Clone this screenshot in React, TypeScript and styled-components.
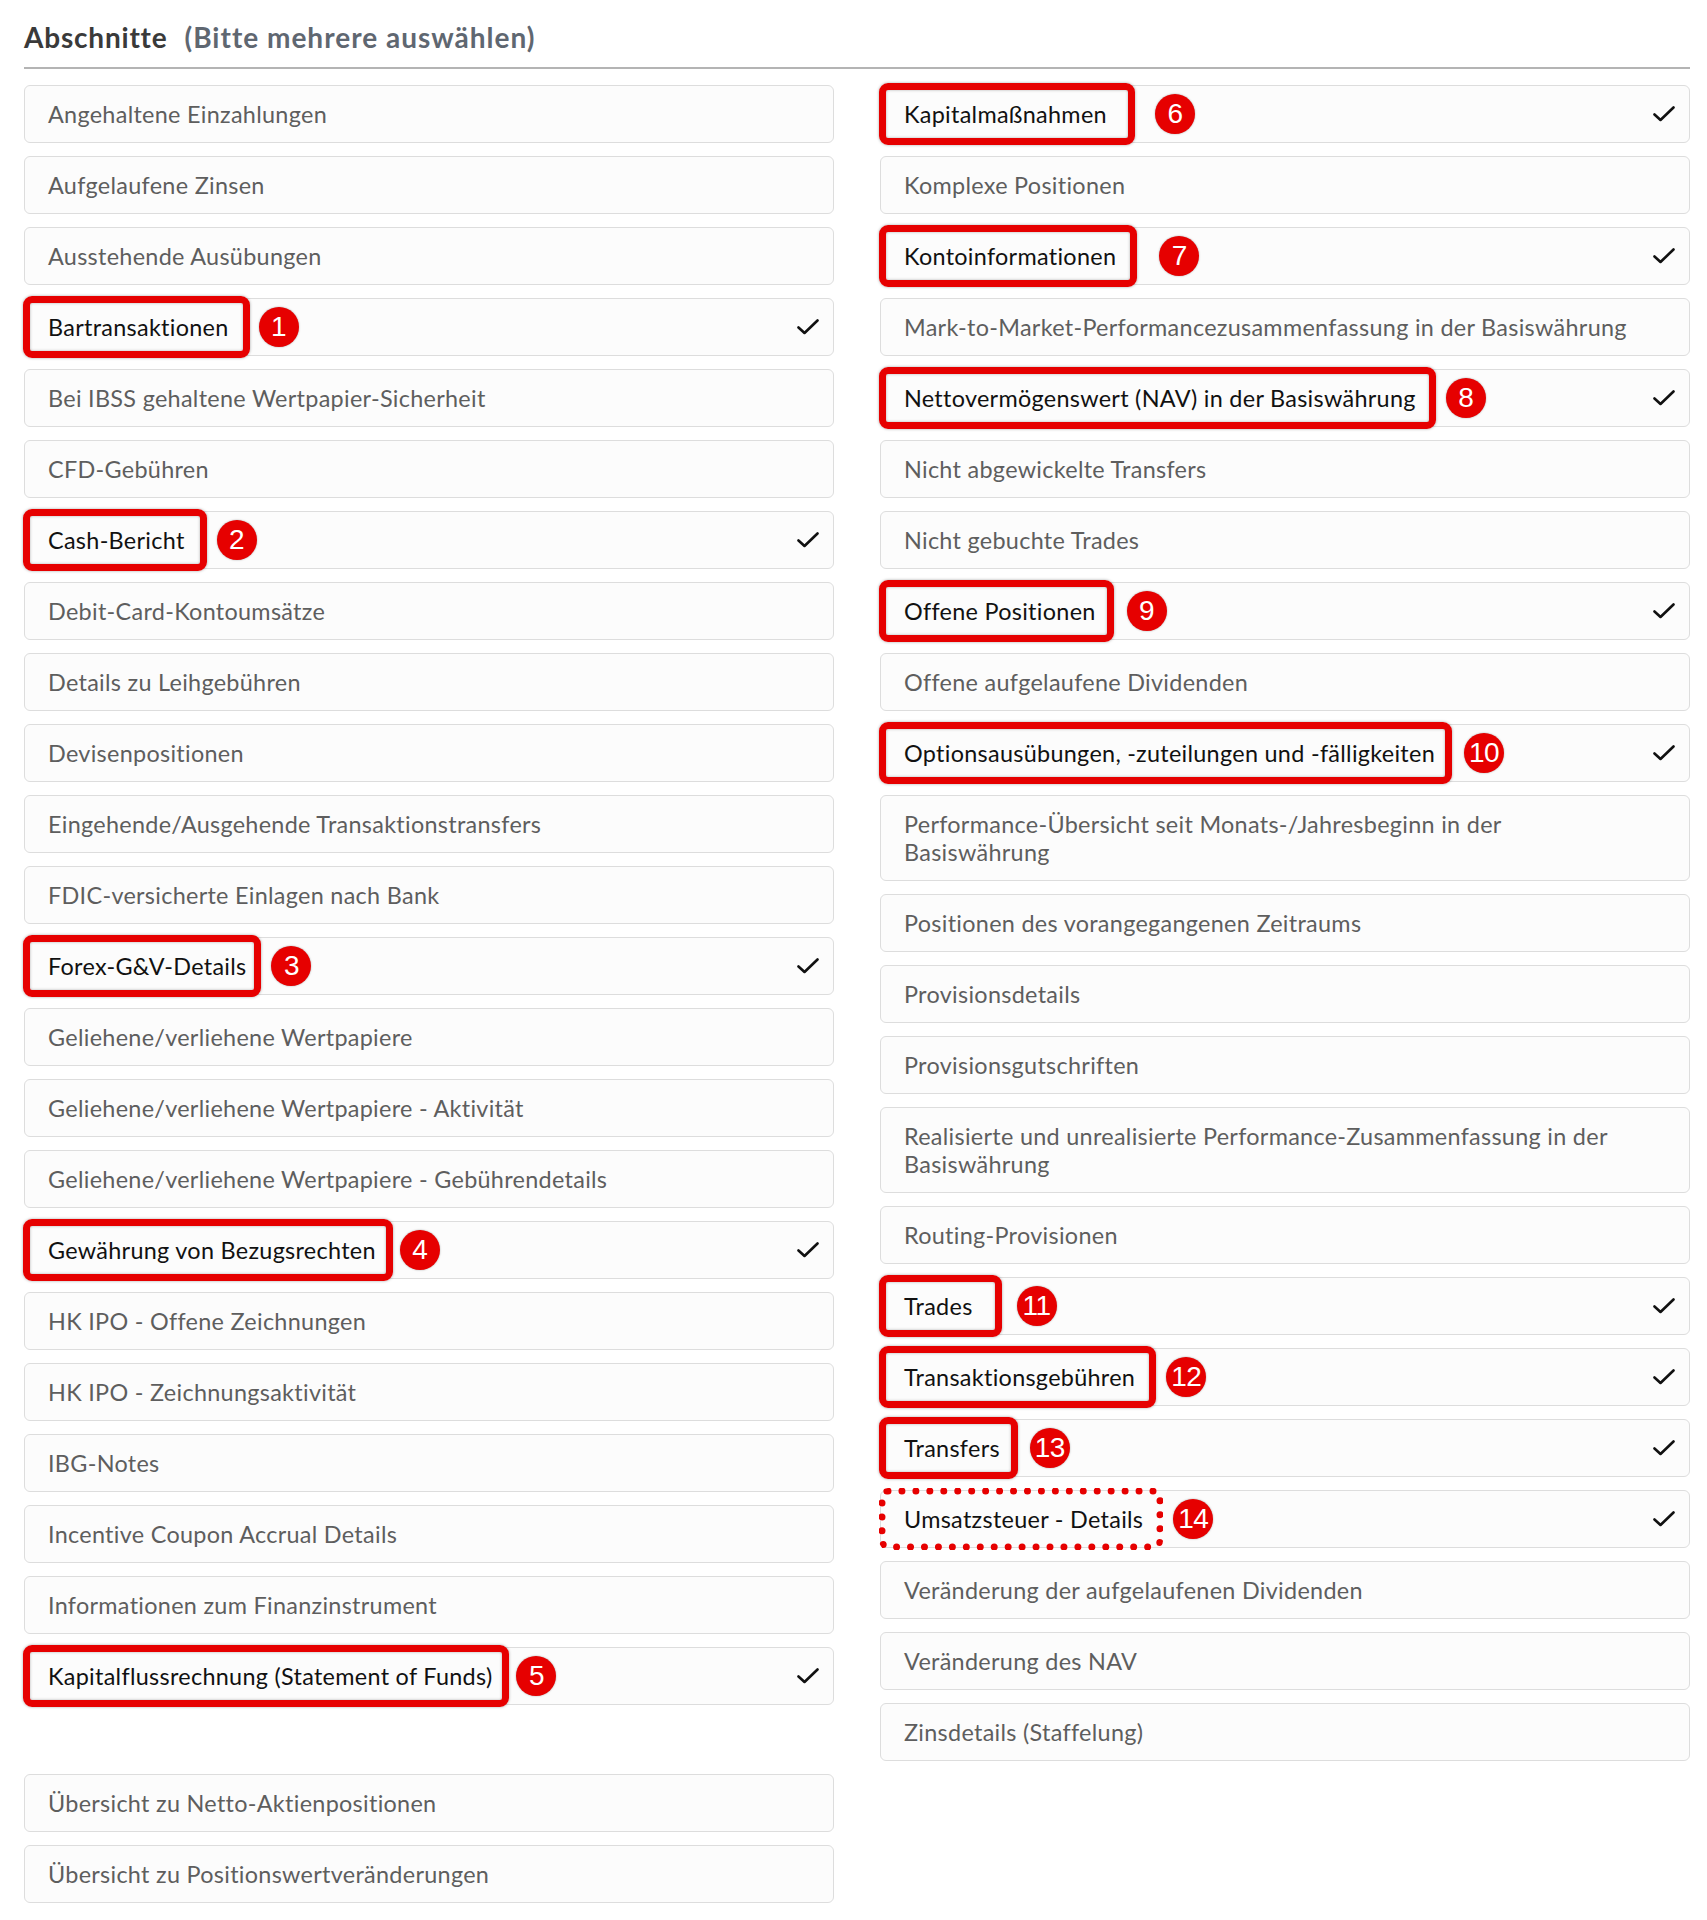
import React from "react";
import styled, { createGlobalStyle, css } from "styled-components";

const Global = createGlobalStyle`
  html, body { margin: 0; padding: 0; background: #ffffff; }
  body { font-family: Lato, "Open Sans", "Liberation Sans", sans-serif; }
  * { box-sizing: border-box; }
`;

type Item = {
  label: string;
  checked?: boolean;
  badge?: number;
  ext?: number;
  gap?: number;
  dotted?: boolean;
};

const leftItems: Item[] = [
  { label: "Angehaltene Einzahlungen" },
  { label: "Aufgelaufene Zinsen" },
  { label: "Ausstehende Ausübungen" },
  { label: "Bartransaktionen", checked: true, badge: 1, ext: 21, gap: 9 },
  { label: "Bei IBSS gehaltene Wertpapier-Sicherheit" },
  { label: "CFD-Gebühren" },
  { label: "Cash-Bericht", checked: true, badge: 2, ext: 22, gap: 10 },
  { label: "Debit-Card-Kontoumsätze" },
  { label: "Details zu Leihgebühren" },
  { label: "Devisenpositionen" },
  { label: "Eingehende/Ausgehende Transaktionstransfers" },
  { label: "FDIC-versicherte Einlagen nach Bank" },
  { label: "Forex-G&V-Details", checked: true, badge: 3, ext: 15, gap: 10 },
  { label: "Geliehene/verliehene Wertpapiere" },
  { label: "Geliehene/verliehene Wertpapiere - Aktivität" },
  { label: "Geliehene/verliehene Wertpapiere - Gebührendetails" },
  { label: "Gewährung von Bezugsrechten", checked: true, badge: 4, ext: 17, gap: 7 },
  { label: "HK IPO - Offene Zeichnungen" },
  { label: "HK IPO - Zeichnungsaktivität" },
  { label: "IBG-Notes" },
  { label: "Incentive Coupon Accrual Details" },
  { label: "Informationen zum Finanzinstrument" },
  { label: "Kapitalflussrechnung (Statement of Funds)", checked: true, badge: 5, ext: 17, gap: 7 },
];

const rightItems: Item[] = [
  { label: "Kapitalmaßnahmen", checked: true, badge: 6, ext: 28, gap: 20 },
  { label: "Komplexe Positionen" },
  { label: "Kontoinformationen", checked: true, badge: 7, ext: 21, gap: 22 },
  { label: "Mark-to-Market-Performancezusammenfassung in der Basiswährung" },
  { label: "Nettovermögenswert (NAV) in der Basiswährung", checked: true, badge: 8, ext: 20, gap: 10 },
  { label: "Nicht abgewickelte Transfers" },
  { label: "Nicht gebuchte Trades" },
  { label: "Offene Positionen", checked: true, badge: 9, ext: 18, gap: 13 },
  { label: "Offene aufgelaufene Dividenden" },
  { label: "Optionsausübungen, -zuteilungen und -fälligkeiten", checked: true, badge: 10, ext: 17, gap: 12 },
  { label: "Performance-Übersicht seit Monats-/Jahresbeginn in der Basiswährung" },
  { label: "Positionen des vorangegangenen Zeitraums" },
  { label: "Provisionsdetails" },
  { label: "Provisionsgutschriften" },
  { label: "Realisierte und unrealisierte Performance-Zusammenfassung in der Basiswährung" },
  { label: "Routing-Provisionen" },
  { label: "Trades", checked: true, badge: 11, ext: 29, gap: 15 },
  { label: "Transaktionsgebühren", checked: true, badge: 12, ext: 21, gap: 10 },
  { label: "Transfers", checked: true, badge: 13, ext: 18, gap: 12 },
  { label: "Umsatzsteuer - Details", checked: true, badge: 14, ext: 20, gap: 10, dotted: true },
  { label: "Veränderung der aufgelaufenen Dividenden" },
  { label: "Veränderung des NAV" },
  { label: "Zinsdetails (Staffelung)" },
];

const extraItems: Item[] = [
  { label: "Übersicht zu Netto-Aktienpositionen" },
  { label: "Übersicht zu Positionswertveränderungen" },
];

const Page = styled.div`
  padding: 20px 17px 17px 24px;
  width: 1707px;
`;

const Header = styled.div`
  display: flex;
  align-items: baseline;
  gap: 17px;
  padding-bottom: 13px;
  border-bottom: 2px solid #b4b4b4;
  margin-bottom: 16px;
`;

const Title = styled.h2`
  margin: 0;
  font-family: Lato, "Open Sans", sans-serif;
  font-weight: 700;
  font-size: 28px;
  line-height: 34px;
  letter-spacing: 0.8px;
  color: #3a3a3a;
`;

const Hint = styled.span`
  font-family: Lato, "Open Sans", sans-serif;
  font-weight: 700;
  font-size: 28px;
  line-height: 34px;
  letter-spacing: 1px;
  color: #5f6771;
`;

const Columns = styled.div`
  display: grid;
  grid-template-columns: 1fr 1fr;
  column-gap: 46px;
  align-items: start;
`;

const List = styled.div`
  display: flex;
  flex-direction: column;
  gap: 13px;
`;

const Extra = styled(Columns)`
  margin-top: 13px;
`;

const Row = styled.div`
  display: flex;
  align-items: center;
  min-height: 58px;
  padding: 14px 14px 14px 23px;
  border: 1px solid #dddddd;
  border-radius: 6px;
  background: #fcfcfc;
`;

const Label = styled.span<{ $selected: boolean; $ext: number; $dotted: boolean }>`
  position: relative;
  flex: 0 1 auto;
  margin-right: 36px;
  font-family: Lato, "Open Sans", sans-serif;
  font-size: 23.4px;
  line-height: 28px;
  letter-spacing: 0.3px;
  color: ${(p) => (p.$selected ? "#111111" : "#5e5e5e")};
  ${(p) =>
    p.$selected &&
    css`
      margin-right: 0;
      &::before {
        content: "";
        position: absolute;
        top: -17px;
        bottom: -17px;
        left: -25px;
        right: -${p.$ext}px;
        border: 7px ${p.$dotted ? "dotted" : "solid"} #e60000;
        border-radius: 9px;
        box-shadow: ${p.$dotted
          ? "none"
          : "0 0 3px rgba(0,0,0,0.35), inset 0 0 3px rgba(0,0,0,0.3)"};
        pointer-events: none;
      }
    `}
`;

const Badge = styled.span<{ $gap: number; $ext: number }>`
  flex: 0 0 auto;
  width: 40px;
  height: 40px;
  margin: -6px 0 -6px ${(p) => p.$ext + p.$gap}px;
  border-radius: 50%;
  background: #e60000;
  box-shadow: 0 0 2px rgba(0, 0, 0, 0.35);
  color: #ffffff;
  display: flex;
  align-items: center;
  justify-content: center;
  font-family: "Liberation Sans", Arial, sans-serif;
  font-size: 28px;
  line-height: 1;
  letter-spacing: -0.5px;
`;

const Check = styled.svg`
  flex: 0 0 auto;
  margin-left: auto;
  width: 22px;
  height: 16px;
`;

function CheckIcon() {
  return (
    <Check viewBox="0 0 22 16" aria-hidden="true">
      <polyline
        points="1.5,8.5 7.5,14 20.5,1.5"
        fill="none"
        stroke="#111"
        strokeWidth="2.6"
        strokeLinecap="round"
        strokeLinejoin="round"
      />
    </Check>
  );
}

function SectionRow({ item }: { item: Item }) {
  const selected = item.badge !== undefined;
  return (
    <Row>
      <Label $selected={selected} $ext={item.ext ?? 0} $dotted={!!item.dotted}>
        {item.label}
      </Label>
      {item.badge !== undefined && (
        <Badge $gap={item.gap ?? 10} $ext={item.ext ?? 0}>
          {item.badge}
        </Badge>
      )}
      {item.checked && <CheckIcon />}
    </Row>
  );
}

export default function App() {
  return (
    <>
      <Global />
      <Page>
        <Header>
          <Title>Abschnitte</Title>
          <Hint>(Bitte mehrere auswählen)</Hint>
        </Header>
        <Columns>
          <List>
            {leftItems.map((it) => (
              <SectionRow key={it.label} item={it} />
            ))}
          </List>
          <List>
            {rightItems.map((it) => (
              <SectionRow key={it.label} item={it} />
            ))}
          </List>
        </Columns>
        <Extra>
          <List>
            {extraItems.map((it) => (
              <SectionRow key={it.label} item={it} />
            ))}
          </List>
        </Extra>
      </Page>
    </>
  );
}
